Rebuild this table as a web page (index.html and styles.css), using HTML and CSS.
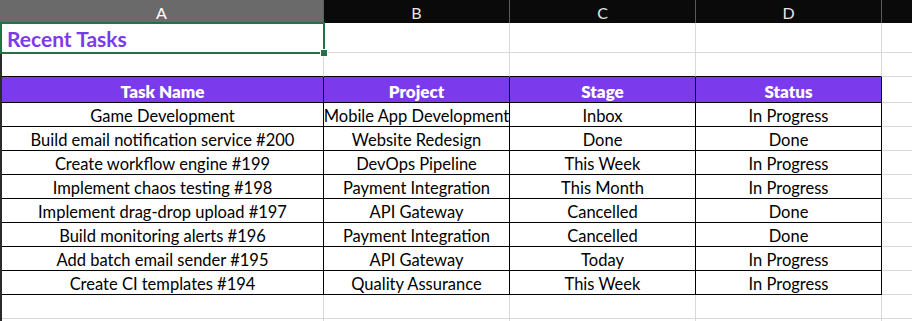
FILE: index.html
```html
<!DOCTYPE html>
<html>
<head>
<meta charset="utf-8">
<link rel="stylesheet" href="styles.css">
</head>
<body>
<div class="sheet">
  <div class="colhead">
    <div class="ch ch-a sel">A</div>
    <div class="ch">B</div>
    <div class="ch">C</div>
    <div class="ch">D</div>
    <div class="ch ch-rest"></div>
  </div>
  <div class="body">
    <div class="row r-title">
      <div class="c title">Recent Tasks</div><div class="c"></div><div class="c"></div><div class="c"></div><div class="c rest"></div>
    </div>
    <div class="row r-gap">
      <div class="c t-above"></div><div class="c t-above"></div><div class="c t-above"></div><div class="c t-above"></div><div class="c rest"></div>
    </div>
    <div class="row r-head">
      <div class="c th">Task Name</div><div class="c th">Project</div><div class="c th">Stage</div><div class="c th">Status</div><div class="c rest"></div>
    </div>
    <div class="row r-data">
      <div class="c td">Game Development</div><div class="c td">Mobile App Development</div><div class="c td">Inbox</div><div class="c td">In Progress</div><div class="c rest"></div>
    </div>
    <div class="row r-data">
      <div class="c td">Build email notification service #200</div><div class="c td">Website Redesign</div><div class="c td">Done</div><div class="c td">Done</div><div class="c rest"></div>
    </div>
    <div class="row r-data">
      <div class="c td">Create workflow engine #199</div><div class="c td">DevOps Pipeline</div><div class="c td">This Week</div><div class="c td">In Progress</div><div class="c rest"></div>
    </div>
    <div class="row r-data">
      <div class="c td">Implement chaos testing #198</div><div class="c td">Payment Integration</div><div class="c td">This Month</div><div class="c td">In Progress</div><div class="c rest"></div>
    </div>
    <div class="row r-data">
      <div class="c td">Implement drag-drop upload #197</div><div class="c td">API Gateway</div><div class="c td">Cancelled</div><div class="c td">Done</div><div class="c rest"></div>
    </div>
    <div class="row r-data">
      <div class="c td">Build monitoring alerts #196</div><div class="c td">Payment Integration</div><div class="c td">Cancelled</div><div class="c td">Done</div><div class="c rest"></div>
    </div>
    <div class="row r-data">
      <div class="c td">Add batch email sender #195</div><div class="c td">API Gateway</div><div class="c td">Today</div><div class="c td">In Progress</div><div class="c rest"></div>
    </div>
    <div class="row r-data">
      <div class="c td">Create CI templates #194</div><div class="c td">Quality Assurance</div><div class="c td">This Week</div><div class="c td">In Progress</div><div class="c rest"></div>
    </div>
    <div class="row r-empty">
      <div class="c"></div><div class="c"></div><div class="c"></div><div class="c"></div><div class="c rest"></div>
    </div>
    <div class="row r-empty">
      <div class="c"></div><div class="c"></div><div class="c"></div><div class="c"></div><div class="c rest"></div>
    </div>
  </div>
  <div class="selbox"><span class="handle"></span></div>
</div>
</body>
</html>
```

FILE: styles.css
```css
html, body {
  margin: 0;
  padding: 0;
  background: #ffffff;
}
.sheet {
  position: relative;
  width: 912px;
  height: 321px;
  overflow: hidden;
  font-family: Lato, "Liberation Sans", sans-serif;
  font-size: 16.5px;
  color: #000;
}
.colhead {
  display: grid;
  grid-template-columns: 324px 186px 186px 186px 1fr;
  height: 23px;
  background: #0a0a0a;
}
.ch {
  box-sizing: border-box;
  border-right: 1px solid #5a5a5a;
  color: #e6e6e6;
  font-size: 16px;
  display: flex;
  align-items: center;
  justify-content: center;
  padding-top: 1px;
}
.ch.sel {
  background: #6a6a6a;
  color: #ffffff;
}
.ch-rest {
  border-right: none;
}
.body {
  border-left: 2px solid #2a2a2a;
}
.row {
  display: grid;
  grid-template-columns: 322px 186px 186px 186px 1fr;
}
.c {
  box-sizing: border-box;
  border-right: 1px solid #d9d9d9;
  border-bottom: 1px solid #d9d9d9;
  display: flex;
  align-items: center;
  justify-content: center;
  white-space: nowrap;
  overflow: hidden;
}
.rest {
  border-right: none;
}
.r-title { height: 30px; }
.r-gap { height: 24px; }
.r-head { height: 26px; }
.r-data { height: 24px; }
.r-empty { height: 24px; }
.title {
  justify-content: flex-start;
  padding-left: 5px;
  padding-top: 2px;
  color: #7c3aed;
  font-weight: 700;
  font-size: 21px;
}
.t-above {
  border-bottom-color: #000;
}
.th {
  background: #7c3aed;
  color: #ffffff;
  font-weight: 800;
  font-size: 17px;
  padding-top: 3px;
  border-right-color: #000;
  border-bottom-color: #000;
}
.td {
  border-right-color: #000;
  border-bottom-color: #000;
  padding-top: 3px;
}
.selbox {
  position: absolute;
  left: 0;
  top: 22px;
  width: 325px;
  height: 32px;
  box-sizing: border-box;
  border: 2px solid #217346;
}
.handle {
  position: absolute;
  right: -5px;
  bottom: -5px;
  width: 6px;
  height: 6px;
  background: #217346;
  border: 1px solid #ffffff;
}
```
